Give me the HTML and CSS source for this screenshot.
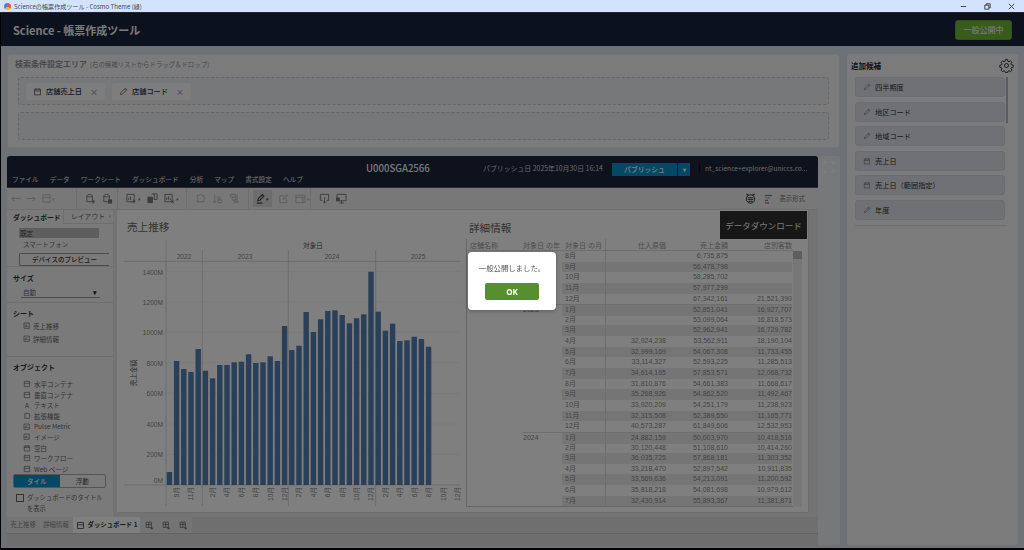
FILE: index.html
```html
<!DOCTYPE html>
<html lang="ja">
<head>
  <meta charset="UTF-8">
  <meta name="viewport" content="width=device-width, initial-scale=1">
  <title>Scienceの帳票作成ツール - Cosmo Theme (緑)</title>
  <link rel="stylesheet" href="styles.css">
</head>
<body>
  <svg class="sprite" aria-hidden="true">
    <symbol id="i-pencil" viewBox="0 0 12 12"><path d="M2 10l.6-2.6L8.4 1.6l2 2L4.6 9.4zM7.4 2.6l2 2"/></symbol>
    <symbol id="i-cal" viewBox="0 0 12 12"><path d="M2 3h8v7.5H2zM2 5.2h8M4 1.5v2.2M8 1.5v2.2"/></symbol>
    <symbol id="i-sheet" viewBox="0 0 12 12"><path d="M1.5 1.5h8v8h-8zM3.5 7.5V5M5.5 7.5V3.5M7.5 7.5V6"/></symbol>
    <symbol id="i-add" viewBox="0 0 12 12"><path d="M1.5 1.5h7v7h-7zM1.5 4.5h7M5 1.5v7M9 8v3.5M7.2 9.8h3.6"/></symbol>
    <symbol id="i-box" viewBox="0 0 12 12"><path d="M2 2h8v8H2zM2 5h8"/></symbol>
    <symbol id="i-db-add" viewBox="0 0 12 12"><path d="M2 3c0-2 6-2 6 0v6.5H2zM2 3.2c0 1.4 6 1.4 6 0M9 7.5v4M7 9.5h4"/></symbol>
    <symbol id="i-db-sq" viewBox="0 0 12 12"><path d="M2 3c0-2 6-2 6 0v6.5H2zM2 3.2c0 1.4 6 1.4 6 0"/><rect x="7" y="7.5" width="3.5" height="3.5" fill="currentColor"/></symbol>
    <symbol id="i-sheet-add" viewBox="0 0 12 12"><path d="M1 1.5h8v8H1zM3 7.5V5M5 7.5V3.5M8.5 7v4.5M6.5 9.2h4"/></symbol>
    <symbol id="i-dash-add" viewBox="0 0 12 12"><path d="M1 4.5h5v6H1z" fill="currentColor"/><path d="M5 1h6v6H7.5M8 1v6"/></symbol>
    <symbol id="i-sheet-x" viewBox="0 0 12 12"><path d="M1 1.5h8v8H1zM3 7.5V5M5 7.5V3.5M7 7.5V6M8 8l3 3M11 8l-3 3"/></symbol>
    <symbol id="i-puzzle" viewBox="0 0 12 12"><path d="M2.5 2.5h2.3c0-1.6 2.4-1.6 2.4 0h2.3v2.3c1.6 0 1.6 2.4 0 2.4v2.3H2.5V7.2c1.2 0 1.2-2.4 0-2.4z"/></symbol>
    <symbol id="i-sort-a" viewBox="0 0 12 12"><path d="M3 1.5v9M1.5 9L3 10.500 4.5 9M6.5 10.5h4v-3h-4zM6.5 7.5H9v-3H6.5z"/></symbol>
    <symbol id="i-sort-d" viewBox="0 0 12 12"><path d="M9 1.5v9M7.5 9L9 10.5 10.5 9M1.5 1.5h6v3h-6zM3.5 4.5h4v3h-4zM5.5 7.5h2v3h-2z"/></symbol>
    <symbol id="i-mark" viewBox="0 0 12 12"><path d="M3 8.5l.5-2.2L8 1.7l1.800 1.800L5.200 8zM2 11h6" stroke-width="1.2"/></symbol>
    <symbol id="i-box-pen" viewBox="0 0 12 12"><path d="M6.5 3H2v7.5h7.5V6M5.5 7l.3-1.500L9.5 1.800l1 1L6.800 6.700z"/></symbol>
    <symbol id="i-frame" viewBox="0 0 12 12"><path d="M1 2.5h10v8H1zM1 4.800h10M8.5 4.800v5.700"/></symbol>
    <symbol id="i-dl" viewBox="0 0 12 12"><path d="M3.5 8h-2V1.500h9V8h-2M6 4.500V11M4 9l2 2 2-2"/></symbol>
    <symbol id="i-monitor" viewBox="0 0 12 12"><path d="M1 1.500h10v7H1zM4 11h4.500M6 8.500V11"/><rect x=".5" y="5.500" width="3" height="3" fill="currentColor"/></symbol>
  </svg>

  <div class="titlebar">
    <span class="app-logo"></span>
    <span class="win-title">Scienceの帳票作成ツール - Cosmo Theme (緑)</span>
    <div class="win-buttons">
      <svg viewBox="0 0 10 10"><path d="M2 5h6"/></svg>
      <svg viewBox="0 0 10 10"><path d="M2 3.500h4.500V8H2zM3.500 3.500V2H8v4.500H6.500"/></svg>
      <svg viewBox="0 0 10 10"><path d="M2 2l6 6M8 2L2 8"/></svg>
    </div>
  </div>

  <div class="app">
    <header class="top-header">
      <h1>Science - 帳票作成ツール</h1>
      <button class="publish-state">一般公開中</button>
    </header>

    <div class="workspace">
      <div class="left-col">
        <section class="search-card">
          <h2>検索条件設定エリア <small>(右の候補リストからドラッグ＆ドロップ)</small></h2>
          <div class="drop-box">
            <div class="chip"><svg class="ic"><use href="#i-cal"/></svg><span>店舗売上日</span><i>×</i></div>
            <div class="chip"><svg class="ic"><use href="#i-pencil"/></svg><span>店舗コード</span><i>×</i></div>
          </div>
          <div class="drop-box"></div>
        </section>

        <section class="viz-card">
          <div class="viz">
            <div class="viz-head">
              <nav class="menu">
                <span>ファイル</span><span>データ</span><span>ワークシート</span><span>ダッシュボード</span><span>分析</span><span>マップ</span><span>書式設定</span><span>ヘルプ</span>
              </nav>
              <div class="wb-name">U000SGA2566</div>
              <div class="pub-date">パブリッシュ日 2025年10月30日 16:14</div>
              <div class="pub-btn"><span>パブリッシュ</span><b>▾</b></div>
              <div class="user">nt_science+explorer@uniccs.co...</div>
            </div>

            <div class="toolbar">
              <div class="tool-group faint"><span class="glyph">←</span><span class="glyph">→</span><svg class="tool"><use href="#i-box"/></svg><span class="caret">▾</span></div>
              <div class="tool-group"><svg class="tool"><use href="#i-db-add"/></svg><svg class="tool"><use href="#i-db-sq"/></svg></div>
              <div class="tool-group"><svg class="tool"><use href="#i-sheet-add"/></svg><span class="caret">▾</span><svg class="tool"><use href="#i-dash-add"/></svg><svg class="tool"><use href="#i-sheet-x"/></svg><span class="caret">▾</span></div>
              <div class="tool-group faint"><svg class="tool"><use href="#i-puzzle"/></svg><svg class="tool"><use href="#i-sort-a"/></svg><svg class="tool"><use href="#i-sort-d"/></svg></div>
              <div class="tool-group"><span class="tool-on"><svg class="tool"><use href="#i-mark"/></svg><span class="caret">▾</span></span><svg class="tool faint"><use href="#i-box-pen"/></svg><svg class="tool faint"><use href="#i-frame"/></svg><span class="caret faint">▾</span></div>
              <div class="tool-group last"><svg class="tool"><use href="#i-dl"/></svg><svg class="tool"><use href="#i-monitor"/></svg></div>
              <div class="tool-right">
                <svg class="mascot" viewBox="0 0 12 12"><circle cx="6" cy="6.500" r="4.600"/><path d="M3 7h6M3 5.200h6M3.600 9h4.800M2.500 3L2 1l2 1M9.500 3L10 1 8 2"/></svg>
                <svg class="show-me" viewBox="0 0 10 10"><path class="b1" d="M1 1.500h7"/><path class="b2" d="M1 4h5"/><path class="b3" d="M1 6.500h3"/><path class="b4" d="M1 9h4"/></svg>
                <span>表示形式</span>
              </div>
            </div>

            <div class="viz-body">
              <aside class="sidebar">
                <div class="side-tabs"><b>ダッシュボード</b><span>レイアウト<em>‹</em></span></div>
                <div class="side-sec device">
                  <div class="preset on">既定</div>
                  <div class="preset">スマートフォン</div>
                  <div class="preview-btn">デバイスのプレビュー</div>
                </div>
                <div class="side-sec size">
                  <h3>サイズ</h3>
                  <div class="size-select"><span>自動</span><b>▾</b></div>
                </div>
                <div class="side-sec sheets">
                  <h3>シート</h3>
                  <div class="sheet-item"><svg class="ic"><use href="#i-sheet"/></svg>売上推移</div>
                  <div class="sheet-item"><svg class="ic"><use href="#i-sheet"/></svg>詳細情報</div>
                </div>
                <div class="side-sec objects">
                  <h3>オブジェクト</h3>
                  <ul>
                    <li><svg class="ic"><use href="#i-box"/></svg>水平コンテナ</li>
                    <li><svg class="ic"><use href="#i-box"/></svg>垂直コンテナ</li>
                    <li><span class="ic-a">A</span>テキスト</li>
                    <li><svg class="ic"><use href="#i-puzzle"/></svg>拡張機能</li>
                    <li><svg class="ic"><use href="#i-sheet"/></svg>Pulse Metric</li>
                    <li><svg class="ic"><use href="#i-sheet"/></svg>イメージ</li>
                    <li><svg class="ic"><use href="#i-cal"/></svg>空白</li>
                    <li><svg class="ic"><use href="#i-box"/></svg>ワークフロー</li>
                    <li><svg class="ic"><use href="#i-box"/></svg>Web ページ</li>
                  </ul>
                  <div class="mode-switch"><span class="on">タイル</span><span>浮動</span></div>
                  <label class="title-check"><span class="box"></span><span>ダッシュボードのタイトル<br>を表示</span></label>
                </div>
              </aside>

              <div class="canvas">
                <div class="chart-pane">
                  <h4>売上推移</h4>
                  <svg class="chart" width="346" height="272" viewBox="0 0 346 272">
                    <g class="grid">
                      <path d="M48 33.7H342M48 64H342M48 94.3H342M48 124.7H342M48 155.3H342M48 186H342M48 216.3H342"/>
                    </g>
                    <g class="rules">
                      <path d="M6 23.3H342M6 247H342M48 2V268M84.3 12V268M170.3 12V268M257.7 12V268"/>
                    </g>
                    <g class="bars" transform="translate(48.7 0)">
                      <rect x="0" y="234" width="5.4" height="13"/>
                      <rect x="7.2" y="123" width="5.4" height="124"/>
                      <rect x="14.4" y="131" width="5.4" height="116"/>
                      <rect x="21.6" y="134" width="5.4" height="113"/>
                      <rect x="28.8" y="111" width="5.4" height="136"/>
                      <rect x="36" y="132.7" width="5.4" height="114.3"/>
                      <rect x="43.2" y="140.3" width="5.4" height="106.7"/>
                      <rect x="50.4" y="127" width="5.4" height="120"/>
                      <rect x="57.6" y="127" width="5.4" height="120"/>
                      <rect x="64.8" y="124.3" width="5.4" height="122.7"/>
                      <rect x="72" y="123.7" width="5.4" height="123.3"/>
                      <rect x="79.2" y="116.3" width="5.4" height="130.7"/>
                      <rect x="86.4" y="125" width="5.4" height="122"/>
                      <rect x="93.6" y="124.3" width="5.4" height="122.7"/>
                      <rect x="100.8" y="118.3" width="5.4" height="128.7"/>
                      <rect x="108" y="123" width="5.4" height="124"/>
                      <rect x="115.2" y="88" width="5.4" height="159"/>
                      <rect x="122.4" y="112" width="5.4" height="135"/>
                      <rect x="129.6" y="107.7" width="5.4" height="139.3"/>
                      <rect x="136.8" y="74" width="5.4" height="173"/>
                      <rect x="144" y="94" width="5.4" height="153"/>
                      <rect x="151.2" y="81.3" width="5.4" height="165.7"/>
                      <rect x="158.4" y="73" width="5.4" height="174"/>
                      <rect x="165.6" y="72.3" width="5.4" height="174.7"/>
                      <rect x="172.8" y="77" width="5.4" height="170"/>
                      <rect x="180" y="85.3" width="5.4" height="161.7"/>
                      <rect x="187.2" y="80.3" width="5.4" height="166.7"/>
                      <rect x="194.4" y="76.3" width="5.4" height="170.7"/>
                      <rect x="201.6" y="33.7" width="5.4" height="213.3"/>
                      <rect x="208.8" y="73.7" width="5.4" height="173.3"/>
                      <rect x="216" y="92.7" width="5.4" height="154.3"/>
                      <rect x="223.2" y="85.7" width="5.4" height="161.3"/>
                      <rect x="230.4" y="103" width="5.4" height="144"/>
                      <rect x="237.6" y="102.3" width="5.4" height="144.7"/>
                      <rect x="244.8" y="98.7" width="5.4" height="148.3"/>
                      <rect x="252" y="101" width="5.4" height="146"/>
                      <rect x="259.2" y="108.7" width="5.4" height="138.3"/>
                    </g>
                    <g class="axis-y">
                      <text x="45" y="36.5">1400M</text>
                      <text x="45" y="66.8">1200M</text>
                      <text x="45" y="97">1000M</text>
                      <text x="45" y="127.5">800M</text>
                      <text x="45" y="158">600M</text>
                      <text x="45" y="188.8">400M</text>
                      <text x="45" y="219">200M</text>
                      <text x="45" y="244.5">0M</text>
                    </g>
                    <g class="axis-top">
                      <text x="195" y="10" class="dark">対象日</text>
                      <text x="66" y="20.5">2022</text>
                      <text x="127" y="20.5">2023</text>
                      <text x="214" y="20.5">2024</text>
                      <text x="300" y="20.5">2025</text>
                    </g>
                    <text class="axis-name" transform="translate(17.5 135) rotate(-90)">売上金額</text>
                    <g class="axis-x" transform="translate(2.5 0)">
                      <text transform="translate(58.4 249) rotate(-90)">9月</text>
                      <text transform="translate(72.8 249) rotate(-90)">11月</text>
                      <text transform="translate(94.4 249) rotate(-90)">2月</text>
                      <text transform="translate(108.8 249) rotate(-90)">4月</text>
                      <text transform="translate(123.2 249) rotate(-90)">6月</text>
                      <text transform="translate(137.6 249) rotate(-90)">8月</text>
                      <text transform="translate(152 249) rotate(-90)">10月</text>
                      <text transform="translate(166.4 249) rotate(-90)">12月</text>
                      <text transform="translate(180.8 249) rotate(-90)">2月</text>
                      <text transform="translate(195.2 249) rotate(-90)">4月</text>
                      <text transform="translate(209.6 249) rotate(-90)">6月</text>
                      <text transform="translate(224 249) rotate(-90)">8月</text>
                      <text transform="translate(238.4 249) rotate(-90)">10月</text>
                      <text transform="translate(252.8 249) rotate(-90)">12月</text>
                      <text transform="translate(267.2 249) rotate(-90)">2月</text>
                      <text transform="translate(281.6 249) rotate(-90)">4月</text>
                      <text transform="translate(296 249) rotate(-90)">6月</text>
                      <text transform="translate(310.4 249) rotate(-90)">8月</text>
                      <text transform="translate(325.5 249) rotate(-90)">10月</text>
                      <text transform="translate(339.9 249) rotate(-90)">12月</text>
                    </g>
                  </svg>
                </div>

                <div class="table-pane">
                  <div class="table-title">
                    <h4>詳細情報</h4>
                    <div class="download-btn">データダウンロード</div>
                  </div>
                  <div class="table-wrap">
                    <div class="detail-table">
                      <div class="row head"><span>店舗名称</span><span>対象日 の年</span><span>対象日 の月</span><span class="num">仕入原価</span><span class="num">売上金額</span><span class="num">店別客数</span></div>
                      <div class="row"><span></span><span></span><span>8月</span><span class="num"></span><span class="num">6,735,875</span><span class="num"></span></div>
                      <div class="row"><span></span><span></span><span>9月</span><span class="num"></span><span class="num">56,478,798</span><span class="num"></span></div>
                      <div class="row"><span></span><span></span><span>10月</span><span class="num"></span><span class="num">58,285,702</span><span class="num"></span></div>
                      <div class="row"><span></span><span></span><span>11月</span><span class="num"></span><span class="num">57,977,299</span><span class="num"></span></div>
                      <div class="row"><span></span><span></span><span>12月</span><span class="num"></span><span class="num">67,342,161</span><span class="num">21,521,390</span></div>
                      <div class="row year"><span></span><span>2023</span><span>1月</span><span class="num"></span><span class="num">52,851,041</span><span class="num">16,927,707</span></div>
                      <div class="row"><span></span><span></span><span>2月</span><span class="num"></span><span class="num">53,099,064</span><span class="num">16,818,573</span></div>
                      <div class="row"><span></span><span></span><span>3月</span><span class="num"></span><span class="num">52,962,941</span><span class="num">16,729,782</span></div>
                      <div class="row"><span></span><span></span><span>4月</span><span class="num">32,924,238</span><span class="num">53,562,911</span><span class="num">18,190,104</span></div>
                      <div class="row"><span></span><span></span><span>5月</span><span class="num">32,999,169</span><span class="num">54,067,308</span><span class="num">11,733,455</span></div>
                      <div class="row"><span></span><span></span><span>6月</span><span class="num">33,114,327</span><span class="num">52,593,225</span><span class="num">11,285,513</span></div>
                      <div class="row"><span></span><span></span><span>7月</span><span class="num">34,614,165</span><span class="num">57,853,571</span><span class="num">12,068,732</span></div>
                      <div class="row"><span></span><span></span><span>8月</span><span class="num">31,810,876</span><span class="num">54,661,383</span><span class="num">11,668,617</span></div>
                      <div class="row"><span></span><span></span><span>9月</span><span class="num">35,268,926</span><span class="num">54,862,520</span><span class="num">11,492,467</span></div>
                      <div class="row"><span></span><span></span><span>10月</span><span class="num">33,920,209</span><span class="num">54,251,179</span><span class="num">11,238,923</span></div>
                      <div class="row"><span></span><span></span><span>11月</span><span class="num">32,315,508</span><span class="num">52,389,550</span><span class="num">11,165,771</span></div>
                      <div class="row"><span></span><span></span><span>12月</span><span class="num">40,573,287</span><span class="num">61,849,606</span><span class="num">12,532,953</span></div>
                      <div class="row year"><span></span><span>2024</span><span>1月</span><span class="num">24,882,159</span><span class="num">50,003,970</span><span class="num">10,418,516</span></div>
                      <div class="row"><span></span><span></span><span>2月</span><span class="num">30,120,448</span><span class="num">51,108,610</span><span class="num">10,414,260</span></div>
                      <div class="row"><span></span><span></span><span>3月</span><span class="num">36,035,725</span><span class="num">57,868,181</span><span class="num">11,303,352</span></div>
                      <div class="row"><span></span><span></span><span>4月</span><span class="num">33,218,470</span><span class="num">52,897,542</span><span class="num">10,911,835</span></div>
                      <div class="row"><span></span><span></span><span>5月</span><span class="num">33,569,636</span><span class="num">54,213,091</span><span class="num">11,200,592</span></div>
                      <div class="row"><span></span><span></span><span>6月</span><span class="num">35,818,218</span><span class="num">54,081,698</span><span class="num">10,979,612</span></div>
                      <div class="row"><span></span><span></span><span>7月</span><span class="num">32,430,914</span><span class="num">55,893,367</span><span class="num">11,381,871</span></div>
                    </div>
                    <div class="scroll-track"><div class="scroll-thumb"></div></div>
                  </div>
                </div>
              </div>
            </div>

            <div class="sheet-tabs">
              <span class="tab">売上推移</span>
              <span class="tab">詳細情報</span>
              <span class="tab active"><svg class="ic"><use href="#i-box"/></svg>ダッシュボード 1</span>
              <span class="tab add"><svg class="ic"><use href="#i-add"/></svg></span>
              <span class="tab add"><svg class="ic"><use href="#i-add"/></svg></span>
              <span class="tab add"><svg class="ic"><use href="#i-add"/></svg></span>
            </div>
            <div class="status-bar"></div>
          </div>
          <div class="viz-side">
            <svg class="fullscreen" viewBox="0 0 12 12"><path d="M1 4V1h3M8 1h3v3M11 8v3H8M4 11H1V8"/></svg>
          </div>
        </section>
      </div>

      <aside class="candidates">
        <div class="cand-head">
          <h2>追加候補</h2>
          <svg class="gear" viewBox="0 0 24 24"><circle cx="12" cy="12" r="3.2"/><path d="M10.3 2.5h3.4l.5 2.7 1.8.8 2.3-1.5 2.4 2.4-1.5 2.3.8 1.8 2.700.5v3.400l-2.700.5-.8 1.800 1.500 2.300-2.400 2.400-2.300-1.500-1.800.8-.5 2.200h-3.400l-.5-2.200-1.800-.8-2.300 1.500-2.400-2.400 1.500-2.300-.8-1.800-2.700-.5v-3.400l2.700-.5.8-1.800-1.500-2.300 2.400-2.400 2.300 1.500 1.800-.8z"/></svg>
        </div>
        <div class="cand-list">
          <div class="cand"><svg class="ic"><use href="#i-pencil"/></svg>四半期度</div>
          <div class="cand"><svg class="ic"><use href="#i-pencil"/></svg>地区コード</div>
          <div class="cand"><svg class="ic"><use href="#i-pencil"/></svg>地域コード</div>
          <div class="cand"><svg class="ic"><use href="#i-cal"/></svg>売上日</div>
          <div class="cand"><svg class="ic"><use href="#i-cal"/></svg>売上日（範囲指定）</div>
          <div class="cand"><svg class="ic"><use href="#i-pencil"/></svg>年度</div>
          <div class="cand-rule"></div>
          <div class="cand-scroll"></div>
        </div>
      </aside>
    </div>

    <div class="dim">
      <div class="modal">
        <p>一般公開しました。</p>
        <button>OK</button>
      </div>
    </div>
  </div>
</body>
</html>
```

FILE: styles.css
```css
* {
  box-sizing: border-box;
}
body {
  margin: 0;
  width: 1024px;
  height: 550px;
  overflow: hidden;
  background-color: #000;
  font-family: "Noto Sans CJK JP", "Noto Sans", sans-serif;
  display: flex;
  flex-direction: column;
  filter: blur(.3px);
}
.sprite {
  display: none;
}
svg {
  fill: none;
  stroke: currentColor;
  stroke-width: 1;
}
h1, h2, h3, h4, p, ul {
  margin: 0;
  padding: 0;
}

/* window title bar */
.titlebar {
  height: 13px;
  flex-shrink: 0;
  background-color: #d3e3fd;
  border-bottom: 1px solid #20262e;
  display: flex;
  align-items: center;
  padding: 0 8px 0 4px;
}
.app-logo {
  width: 7px;
  height: 7px;
  border-radius: 50%;
  background: conic-gradient(#e8543f 0 35%, #f1b83a 35% 65%, #4a7fd6 65%);
  margin-right: 3px;
}
.win-title {
  font-size: 6.1px;
  color: #44484e;
}
.win-buttons {
  margin-left: auto;
  display: flex;
  gap: 15px;
}
.win-buttons svg {
  width: 9px;
  height: 9px;
  color: #33373d;
}

/* app */
.app {
  position: relative;
  flex: 1;
  margin: 0 0 2px 1px;
  background-color: #dde4ec;
  display: flex;
  flex-direction: column;
  min-height: 0;
}
.top-header {
  height: 33px;
  flex-shrink: 0;
  background-color: #16223a;
  display: flex;
  justify-content: space-between;
  align-items: center;
  padding: 0 12px;
}
.top-header h1 {
  font-size: 11px;
  font-weight: 700;
  color: #fff;
  opacity: .95;
}
.publish-state {
  width: 57px;
  height: 20px;
  padding: 0;
  border: 1px solid #6aa32f;
  border-radius: 3px;
  background-color: #72b83a;
  color: #fff;
  font-family: inherit;
  font-size: 8px;
}
.workspace {
  flex: 1;
  display: flex;
  gap: 7px;
  padding: 8px 6px 3px 6px;
  min-height: 0;
}
.left-col {
  width: 833px;
  display: flex;
  flex-direction: column;
  gap: 8px;
}

/* search conditions */
.search-card {
  height: 94px;
  background-color: #f6f7f8;
  border: 1px solid #e4e8ee;
  border-radius: 3px;
  padding: 3px 10px 0 10px;
}
.search-card h2 {
  font-size: 8px;
  line-height: 12px;
  color: #8f959b;
  font-weight: 700;
  margin-left: -3px;
  margin-bottom: 6px;
}
.search-card small {
  font-size: 6.4px;
  font-weight: 400;
  margin-left: 1px;
}
.drop-box {
  height: 28px;
  border: 1px dashed #c9ced5;
  border-radius: 3px;
  background-color: #eef0f3;
  margin-bottom: 7px;
  display: flex;
  align-items: center;
  gap: 7px;
  padding-left: 7px;
}
.chip {
  height: 17px;
  width: 79px;
  background-color: #fafafa;
  border-radius: 3px;
  display: flex;
  align-items: center;
  padding-left: 7px;
  font-size: 7.2px;
  font-weight: 500;
  color: #2c3036;
}
.chip .ic {
  width: 9px;
  height: 9px;
  margin-right: 4px;
  color: #555;
}
.chip i {
  margin-left: auto;
  margin-right: 7px;
  font-style: normal;
  color: #999;
  font-size: 8px;
}

/* tableau embed */
.viz-card {
  flex: 1;
  display: flex;
  background-color: #eef1f5;
  border-radius: 3px;
  min-height: 0;
}
.viz {
  width: 811px;
  display: flex;
  flex-direction: column;
  background-color: #e6e6e6;
}
.viz-side {
  flex: 1;
  display: flex;
  justify-content: center;
  padding-top: 5px;
}
.fullscreen {
  width: 12px;
  height: 12px;
  color: #fff;
  stroke-width: 1.2;
}
.viz-head {
  height: 32px;
  flex-shrink: 0;
  background-color: #1c2438;
  border-radius: 3px 3px 0 0;
  border-bottom: 1px solid #555;
  display: flex;
  align-items: center;
  color: #cfd3da;
}
.menu {
  align-self: flex-end;
  width: 359px;
  padding: 0 0 3px 5px;
  display: flex;
  gap: 11px;
  font-size: 6.7px;
  line-height: 10px;
  color: #e3e3e3;
}
.wb-name {
  width: 117px;
  margin-top: -7px;
  font-size: 9.6px;
  font-weight: 500;
  color: #f2f2f2;
}
.pub-date {
  width: 129px;
  margin-top: -7px;
  font-size: 6.9px;
  white-space: nowrap;
}
.pub-btn {
  width: 78px;
  height: 13px;
  margin-top: -5px;
  background-color: #0690c8;
  display: flex;
  color: #fff;
  font-size: 6.8px;
  font-weight: 500;
  line-height: 13px;
}
.pub-btn span {
  flex: 1;
  text-align: center;
}
.pub-btn b {
  width: 13px;
  text-align: center;
  border-left: 1px solid #1c2438;
  font-size: 6px;
}
.user {
  margin-left: 9px;
  margin-top: -7px;
  font-size: 6.6px;
  white-space: nowrap;
  border-left: 1px solid #111;
  padding-left: 5px;
}

/* toolbar */
.toolbar {
  height: 22px;
  flex-shrink: 0;
  background-color: #f0f0f0;
  border-bottom: 1px solid #ddd;
  display: flex;
  align-items: center;
  padding-left: 4px;
  color: #777;
}
.tool-group {
  display: flex;
  align-items: center;
  gap: 6px;
  height: 100%;
  padding-left: 8px;
  border-right: 1px solid #ddd;
}
.tool-group:nth-child(1) { width: 66px; padding-left: 0; gap: 5px; }
.tool-group:nth-child(2) { width: 41px; }
.tool-group:nth-child(3) { width: 69px; }
.tool-group:nth-child(4) { width: 62px; }
.tool-group:nth-child(5) { width: 62px; padding-left: 4px; }
.tool-group.last {
  border-right: 0;
}
.tool {
  width: 11px;
  height: 11px;
}
.faint {
  color: #bbb;
}
.glyph {
  font-size: 10px;
  width: 10px;
  text-align: center;
}
.caret {
  font-size: 5px;
  margin-left: -5px;
}
.tool-on {
  background-color: #dadada;
  display: flex;
  align-items: center;
  gap: 5px;
  height: 17px;
  padding: 0 3px 0 2px;
  color: #444;
}
.tool-right {
  margin-left: auto;
  margin-right: 13px;
  display: flex;
  align-items: center;
  gap: 5px;
  font-size: 6.4px;
  color: #777;
}
.mascot {
  width: 11px;
  height: 11px;
  color: #333;
  margin-right: 3px;
}
.show-me {
  width: 10px;
  height: 10px;
  stroke-width: 1.4;
}
.show-me .b1 { stroke: #6d8fc4; }
.show-me .b2 { stroke: #b9bfc8; }
.show-me .b3 { stroke: #c96a6a; }
.show-me .b4 { stroke: #c96a6a; }

/* tableau body */
.viz-body {
  height: 307px;
  flex-shrink: 0;
  display: flex;
  gap: 4px;
  overflow: hidden;
}
.sidebar {
  width: 106px;
  flex-shrink: 0;
  background-color: #f4f4f4;
  font-size: 6.5px;
  color: #666;
  overflow: hidden;
}
.sidebar h3 {
  font-size: 7px;
  line-height: 11px;
  font-weight: 700;
  color: #333;
}
.side-tabs {
  height: 14px;
  display: flex;
  align-items: flex-end;
  padding-left: 6px;
  font-size: 6.8px;
  line-height: 13px;
}
.side-tabs b {
  width: 50px;
  color: #333;
  white-space: nowrap;
}
.side-tabs span {
  flex: 1;
  height: 14px;
  border-left: 1px solid #ddd;
  border-bottom: 1px solid #ddd;
  padding-left: 7px;
  white-space: nowrap;
  overflow: hidden;
  position: relative;
}
.side-tabs em {
  position: absolute;
  right: 2px;
  top: -1px;
  font-style: normal;
  background-color: #f4f4f4;
  padding-left: 2px;
}
.side-sec {
  border-bottom: 1px solid #ddd;
  padding-left: 6px;
}
.device {
  height: 43px;
  padding: 4px 0 0 12px;
}
.preset {
  width: 80px;
  height: 10px;
  line-height: 10px;
  padding-left: 4px;
}
.preset.on {
  background-color: #bdbdbd;
  padding-left: 1px;
  color: #444;
}
.preset + .preset {
  margin-top: 1px;
  margin-bottom: 4px;
}
.preview-btn {
  height: 13px;
  width: 90px;
  border: 1px solid #999;
  border-right: 0;
  border-radius: 2px 0 0 2px;
  text-align: center;
  line-height: 11px;
  font-weight: 500;
  color: #333;
}
.size {
  height: 36px;
  padding-top: 6px;
}
.size-select {
  width: 79px;
  margin: 3px 0 0 8px;
  height: 11px;
  line-height: 11px;
  padding-left: 2px;
  border-bottom: 1px solid #999;
  display: flex;
  justify-content: space-between;
}
.size-select b {
  margin-right: 3px;
  color: #333;
}
.sheets {
  height: 54px;
  padding-top: 5px;
}
.sheet-item {
  display: flex;
  align-items: center;
  height: 12px;
  margin-top: 1px;
  padding-left: 10px;
  gap: 2px;
}
.sidebar .ic {
  width: 8px;
  height: 8px;
  flex-shrink: 0;
}
.objects {
  border-bottom: 0;
  padding-top: 5px;
}
.objects ul {
  list-style: none;
  margin-top: 5px;
  height: 96px;
  overflow: hidden;
  padding-left: 10px;
  padding-top: 1px;
}
.objects li {
  height: 10.6px;
  line-height: 10.6px;
  display: flex;
  align-items: center;
  gap: 3px;
}
.ic-a {
  width: 8px;
  text-align: center;
}
.mode-switch {
  display: flex;
  width: 93px;
  height: 14px;
  border: 1px solid #aaa;
  border-radius: 2px;
  line-height: 12px;
  text-align: center;
  font-weight: 500;
}
.mode-switch span {
  flex: 1;
}
.mode-switch .on {
  background-color: #0690c8;
  color: #fff;
}
.title-check {
  display: flex;
  gap: 3px;
  margin: 5px 0 0 3px;
  line-height: 10.5px;
  font-size: 6.3px;
  white-space: nowrap;
}
.title-check .box {
  width: 8px;
  height: 8px;
  flex-shrink: 0;
  margin-top: 1px;
  border: 1px solid #666;
}

/* dashboard canvas */
.canvas {
  width: 692px;
  height: 303px;
  background-color: #fff;
  border-right: 1px solid #ddd;
  border-bottom: 1px solid #ddd;
  display: flex;
}
.canvas h4 {
  font-size: 10.6px;
  font-weight: 400;
  color: #666;
  line-height: 33px;
}
.chart-pane {
  width: 348px;
  flex-shrink: 0;
  padding-left: 1px;
}
.chart-pane h4 {
  height: 28px;
  padding-left: 9px;
}
.chart {
  display: block;
}
.chart text {
  stroke: none;
  font-size: 6.6px;
  fill: #8a8a8a;
  font-family: "Liberation Sans", "Noto Sans CJK JP", sans-serif;
}
.chart .grid {
  stroke: #eeeeee;
  stroke-width: .6;
}
.chart .rules {
  stroke: #c8c8c8;
  stroke-width: .7;
}
.chart .bars rect {
  fill: #5480b0;
  stroke: none;
}
.axis-y text {
  text-anchor: end;
}
.axis-top text {
  text-anchor: middle;
}
.chart .axis-top .dark,
.chart .axis-name {
  fill: #555;
}
.axis-name {
  text-anchor: middle;
}
.axis-x text {
  text-anchor: end;
}

.table-pane {
  flex: 1;
  min-width: 0;
  padding-left: 1px;
}
.table-title {
  height: 29px;
  display: flex;
  justify-content: space-between;
  padding: 1px 1px 0 3px;
}
.download-btn {
  width: 87px;
  height: 28px;
  background-color: #2e2e2e;
  color: #f0f0f0;
  font-size: 8.5px;
  line-height: 28px;
  text-align: center;
}
.table-wrap {
  display: flex;
}
.detail-table {
  width: 327px;
  border-left: 1px solid #ccc;
  font-size: 7px;
  color: #8a8a8a;
  font-family: "Liberation Sans", "Noto Sans CJK JP", sans-serif;
}
.row {
  display: grid;
  grid-template-columns: 56px 39px 44px 60px 62px 64px;
  height: 10.65px;
  line-height: 10.65px;
  white-space: nowrap;
}
.row.head {
  height: 12px;
  line-height: 14px;
  border-bottom: 1px solid #ddd;
  color: #999;
}
.row span:first-child {
  padding-left: 3px;
}
.row span:nth-child(3) {
  padding-left: 3px;
  border-right: 1px solid #ddd;
}
.row .num {
  text-align: right;
}
.row:nth-child(odd):not(.head) span:nth-child(n+3) {
  background-color: #eaeaea;
}
.row.year span:nth-child(n+2) {
  border-top: 1px solid #ddd;
}
.row:last-child {
  border-bottom: 1px solid #ccc;
  height: 11px;
}
.row:last-child span:nth-child(n+4) {
  background-color: transparent;
}
.scroll-track {
  width: 9px;
  margin-top: 12px;
  background-color: #eeeeee;
}
.scroll-thumb {
  height: 8px;
  background-color: #bdbdbd;
}

/* sheet tabs */
.sheet-tabs {
  height: 16px;
  flex-shrink: 0;
  display: flex;
  background-color: #dedede;
  font-size: 6.4px;
  line-height: 16px;
  color: #888;
}
.tab {
  width: 33px;
  text-align: center;
  border-right: 1px solid #e8e8e8;
  background-color: #e8e8e8;
  white-space: nowrap;
}
.tab.active {
  width: 68px;
  background-color: #fff;
  color: #333;
  font-weight: 700;
  display: flex;
  align-items: center;
  justify-content: center;
  gap: 3px;
}
.tab.add {
  width: 17px;
  display: flex;
  align-items: center;
  justify-content: center;
  color: #666;
}
.tab .ic {
  width: 9px;
  height: 9px;
}
.status-bar {
  flex: 1;
  background-color: #dcdcdc;
  border-top: 1px solid #c9c9c9;
}

/* candidates */
.candidates {
  flex: 1;
  background-color: #f6f7f8;
  border-radius: 3px;
  padding: 0 4px;
}
.cand-head {
  height: 23px;
  display: flex;
  align-items: center;
  justify-content: space-between;
}
.cand-head h2 {
  font-size: 7.5px;
  font-weight: 700;
  color: #23272d;
}
.gear {
  width: 15px;
  height: 15px;
  color: #2b2f35;
  stroke-width: 1.5;
}
.cand-list {
  position: relative;
  padding-left: 4px;
  display: flex;
  flex-direction: column;
  gap: 4.6px;
  width: 156px;
}
.cand {
  width: 150px;
  height: 20px;
  background-color: #dee3e9;
  border: 1px solid #d5dbe2;
  border-radius: 3px;
  display: flex;
  align-items: center;
  padding-left: 7px;
  font-size: 7.2px;
  color: #333;
}
.cand .ic {
  width: 8px;
  height: 8px;
  margin-right: 4px;
  color: #777;
}
.cand-rule {
  width: 152px;
  height: 1px;
  background-color: #dcdcdc;
}
.cand-scroll {
  position: absolute;
  left: 155px;
  top: 0;
  width: 2px;
  height: 46px;
  background-color: #a9b8cc;
}

/* dim layer + dialog */
.dim {
  position: absolute;
  inset: 0;
  background-color: rgba(0, 0, 0, .5);
  backdrop-filter: blur(.4px);
}
.modal {
  position: absolute;
  left: 467px;
  top: 239px;
  width: 88px;
  height: 58px;
  background-color: #fff;
  border-radius: 4px;
  box-shadow: 0 1px 4px rgba(0, 0, 0, .3);
  display: flex;
  flex-direction: column;
  align-items: center;
  padding-top: 10px;
}
.modal p {
  font-size: 7.4px;
  line-height: 12px;
  color: #555;
}
.modal button {
  margin-top: 9px;
  width: 54px;
  height: 17px;
  padding: 0;
  border: 0;
  border-radius: 2px;
  background-color: #578f2f;
  color: #fff;
  font-family: "Noto Sans", sans-serif;
  font-size: 8px;
  font-weight: 700;
}
```
